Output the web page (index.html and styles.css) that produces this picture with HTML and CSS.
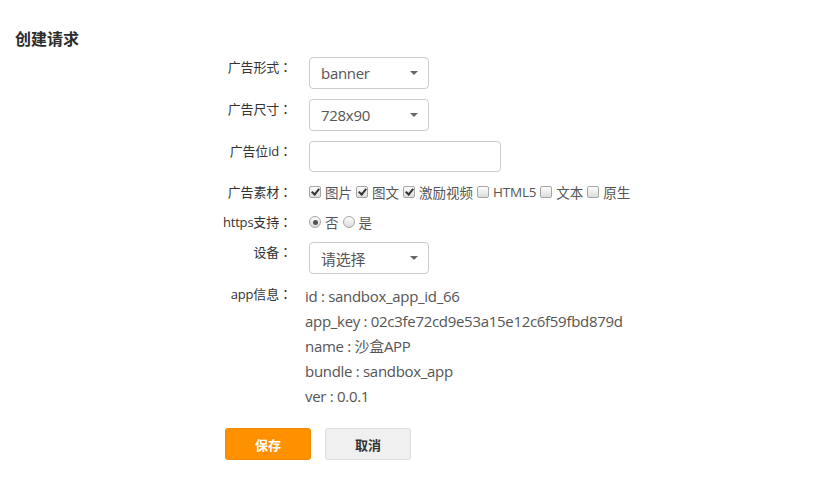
FILE: index.html
```html
<!DOCTYPE html>
<html lang="zh-CN">
<head>
<meta charset="utf-8">
<title>创建请求</title>
<link rel="stylesheet" href="styles.css">
</head>
<body>
<div class="page">
  <h2 class="title">创建请求</h2>
  <div class="form">
    <div class="label">广告形式<span class="colon" lang="zh-TW">：</span></div>
    <div class="control">
      <div class="select"><span class="select-text">banner</span><span class="arrow"></span></div>
    </div>

    <div class="label">广告尺寸<span class="colon" lang="zh-TW">：</span></div>
    <div class="control">
      <div class="select"><span class="select-text">728x90</span><span class="arrow"></span></div>
    </div>

    <div class="label">广告位id<span class="colon" lang="zh-TW">：</span></div>
    <div class="control">
      <input class="text-input" type="text">
    </div>

    <div class="label">广告素材<span class="colon" lang="zh-TW">：</span></div>
    <div class="control options">
      <label class="opt"><input type="checkbox" class="cb" checked>图片</label>
      <label class="opt"><input type="checkbox" class="cb" checked>图文</label>
      <label class="opt"><input type="checkbox" class="cb" checked>激励视频</label>
      <label class="opt"><input type="checkbox" class="cb"><span class="latin">HTML5</span></label>
      <label class="opt"><input type="checkbox" class="cb">文本</label>
      <label class="opt"><input type="checkbox" class="cb">原生</label>
    </div>

    <div class="label">https支持<span class="colon" lang="zh-TW">：</span></div>
    <div class="control options">
      <label class="opt"><input type="radio" class="rb" name="https" checked>否</label>
      <label class="opt"><input type="radio" class="rb" name="https">是</label>
    </div>

    <div class="label">设备<span class="colon" lang="zh-TW">：</span></div>
    <div class="control">
      <div class="select"><span class="select-text">请选择</span><span class="arrow"></span></div>
    </div>

    <div class="label">app信息<span class="colon" lang="zh-TW">：</span></div>
    <div class="control info">
      <div class="info-line">id : sandbox_app_id_66</div>
      <div class="info-line">app_key : 02c3fe72cd9e53a15e12c6f59fbd879d</div>
      <div class="info-line">name : 沙盒APP</div>
      <div class="info-line">bundle : sandbox_app</div>
      <div class="info-line">ver : 0.0.1</div>
    </div>
  </div>
  <div class="actions">
    <button class="btn btn-primary" type="button">保存</button>
    <button class="btn btn-default" type="button">取消</button>
  </div>
</div>
</body>
</html>
```
FILE: styles.css
```css
html, body {
  margin: 0;
  padding: 0;
  background: #fff;
}
body {
  font-family: "Open Sans", "Noto Sans CJK SC", sans-serif;
  color: #333;
}
.page {
  padding: 26px 0 0 15px;
}
.title {
  margin: 0 0 7px 0;
  font-size: 16px;
  line-height: 24px;
  font-weight: bold;
  color: #2b2b2b;
  font-family: "Noto Sans CJK SC", sans-serif;
}
.form {
  display: grid;
  grid-template-columns: 277px 1fr;
  column-gap: 17px;
  row-gap: 10px;
}
.label {
  text-align: right;
  font-size: 13px;
  line-height: 20px;
  color: #333;
  white-space: nowrap;
  letter-spacing: -0.2px;
}
.colon {
  font-family: "Noto Sans CJK TC", sans-serif;
  letter-spacing: 0;
}
.control {
  min-width: 0;
}
.select {
  box-sizing: border-box;
  width: 120px;
  height: 32px;
  border: 1px solid #ccc;
  border-radius: 4px;
  display: flex;
  align-items: center;
  justify-content: space-between;
  padding: 0 10px 0 11px;
  font-size: 15px;
  color: #555;
  letter-spacing: -0.3px;
}
.arrow {
  width: 0;
  height: 0;
  border-left: 4px solid transparent;
  border-right: 4px solid transparent;
  border-top: 4px solid #666;
}
.text-input {
  box-sizing: border-box;
  width: 192px;
  height: 31px;
  border: 1px solid #ccc;
  border-radius: 4px;
  margin: 0;
  padding: 0 10px;
  display: block;
  font: inherit;
}
.options {
  display: flex;
  align-items: center;
  height: 20px;
  font-size: 13.5px;
  color: #555;
  gap: 4px;
}
.latin {
  letter-spacing: -0.2px;
}
.opt {
  display: inline-flex;
  align-items: center;
  gap: 4px;
}
.cb, .rb {
  -webkit-appearance: none;
  appearance: none;
  box-sizing: border-box;
  width: 12px;
  height: 12px;
  margin: 0;
  border: 1px solid #a6a6a6;
  background: linear-gradient(#fdfdfd, #dcdcdc);
  position: relative;
  flex: none;
}
.cb {
  border-radius: 2px;
}
.cb:checked::after {
  content: "";
  position: absolute;
  left: 3px;
  top: 0px;
  width: 3px;
  height: 6px;
  border-right: 2px solid #333;
  border-bottom: 2px solid #333;
  transform: rotate(40deg);
}
.rb {
  border-radius: 50%;
}
.rb:checked::after {
  content: "";
  position: absolute;
  left: 2.5px;
  top: 2.5px;
  width: 5px;
  height: 5px;
  border-radius: 50%;
  background: #555;
}
.info {
  margin-left: -4px;
}
.info-line {
  font-size: 15px;
  line-height: 25px;
  color: #555;
  white-space: nowrap;
  letter-spacing: -0.3px;
}
.actions {
  display: flex;
  gap: 14px;
  margin: 19px 0 0 210px;
}
.btn {
  box-sizing: border-box;
  width: 86px;
  height: 32px;
  border-radius: 3px;
  font-family: "Noto Sans CJK SC", sans-serif;
  font-size: 13px;
  font-weight: bold;
  cursor: pointer;
  padding: 0;
}
.btn-primary {
  background: #ff9100;
  border: 1px solid #f08800;
  color: #fff;
}
.btn-default {
  background: #f0f0f0;
  border: 1px solid #dcdcdc;
  color: #333;
}
```
